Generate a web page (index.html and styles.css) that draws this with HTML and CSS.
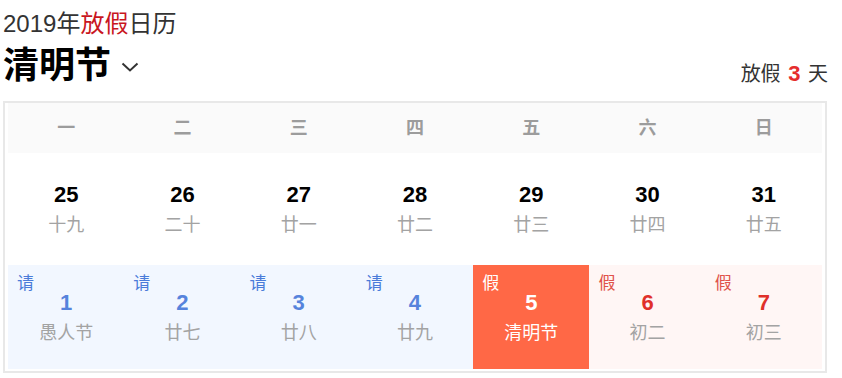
FILE: index.html
```html
<!DOCTYPE html>
<html lang="zh-CN">
<head>
<meta charset="utf-8">
<title>2019年放假日历</title>
<link rel="stylesheet" href="styles.css">
</head>
<body>
<div class="page">
  <div class="sub">2019年<span class="sub-red">放假</span>日历</div>
  <div class="head">
    <div class="title">清明节<svg class="chev" width="18" height="10" viewBox="0 0 18 10"><path d="M1.5 1.5 L9 8.5 L16.5 1.5" fill="none" stroke="#333" stroke-width="2"/></svg></div>
    <div class="days">放假 <b class="days-num">3</b> 天</div>
  </div>
  <div class="cal">
    <div class="wk">一</div><div class="wk">二</div><div class="wk">三</div><div class="wk">四</div><div class="wk">五</div><div class="wk">六</div><div class="wk">日</div>

    <div class="cell"><div class="num">25</div><div class="lunar">十九</div></div>
    <div class="cell"><div class="num">26</div><div class="lunar">二十</div></div>
    <div class="cell"><div class="num">27</div><div class="lunar">廿一</div></div>
    <div class="cell"><div class="num">28</div><div class="lunar">廿二</div></div>
    <div class="cell"><div class="num">29</div><div class="lunar">廿三</div></div>
    <div class="cell"><div class="num">30</div><div class="lunar">廿四</div></div>
    <div class="cell"><div class="num">31</div><div class="lunar">廿五</div></div>

    <div class="cell work"><span class="tag">请</span><div class="num">1</div><div class="lunar">愚人节</div></div>
    <div class="cell work"><span class="tag">请</span><div class="num">2</div><div class="lunar">廿七</div></div>
    <div class="cell work"><span class="tag">请</span><div class="num">3</div><div class="lunar">廿八</div></div>
    <div class="cell work"><span class="tag">请</span><div class="num">4</div><div class="lunar">廿九</div></div>
    <div class="cell today"><span class="tag">假</span><div class="num">5</div><div class="lunar">清明节</div></div>
    <div class="cell rest"><span class="tag">假</span><div class="num">6</div><div class="lunar">初二</div></div>
    <div class="cell rest"><span class="tag">假</span><div class="num">7</div><div class="lunar">初三</div></div>
  </div>
</div>
</body>
</html>
```

FILE: styles.css
```css
html, body {
  margin: 0;
  padding: 0;
  background: #fff;
}
body {
  font-family: "Liberation Sans", "Noto Sans CJK SC", sans-serif;
  color: #333;
}
.page {
  width: 825px;
  margin-left: 3px;
  padding-top: 10px;
}
.sub {
  font-size: 24px;
  line-height: 28px;
  color: #333;
}
.sub-red {
  color: #c9161e;
}
.head {
  display: flex;
  justify-content: space-between;
  align-items: flex-end;
  margin-top: 8px;
  margin-bottom: 15px;
}
.title {
  display: flex;
  align-items: center;
  font-size: 36px;
  line-height: 40px;
  font-weight: bold;
  color: #000;
}
.chev {
  margin-left: 10px;
  margin-top: 2px;
}
.days {
  font-size: 20px;
  line-height: 24px;
  color: #333;
}
.days-num {
  color: #e52d2d;
  font-size: 22px;
  margin: 0 2px;
}
.cal {
  width: 814px;
  border: 2px solid #e8e8e8;
  padding: 0 3px 2px 3px;
  display: grid;
  grid-template-columns: repeat(7, 1fr);
  grid-template-rows: 50px 104px 104px;
  row-gap: 4px;
}
.wk {
  background: #fafafa;
  text-align: center;
  line-height: 50px;
  font-size: 18px;
  font-weight: bold;
  color: #9c9c9c;
}
.cell {
  position: relative;
  text-align: center;
  background: #fff;
}
.num {
  margin-top: 25px;
  font-size: 22px;
  line-height: 26px;
  font-weight: bold;
  color: #000;
}
.lunar {
  margin-top: 4px;
  font-size: 18px;
  line-height: 26px;
  color: #a3a3a3;
}
.tag {
  position: absolute;
  top: 9px;
  left: 9px;
  font-size: 17px;
  line-height: 20px;
}
.work {
  background: #f2f7ff;
}
.work .tag {
  color: #4a7bd9;
}
.work .num {
  color: #5683dc;
}
.rest {
  background: #fff6f5;
}
.rest .tag {
  color: #e0534b;
}
.rest .num {
  color: #e0302a;
}
.today {
  background: #ff6846;
}
.today .tag,
.today .num,
.today .lunar {
  color: #fff;
}
```
